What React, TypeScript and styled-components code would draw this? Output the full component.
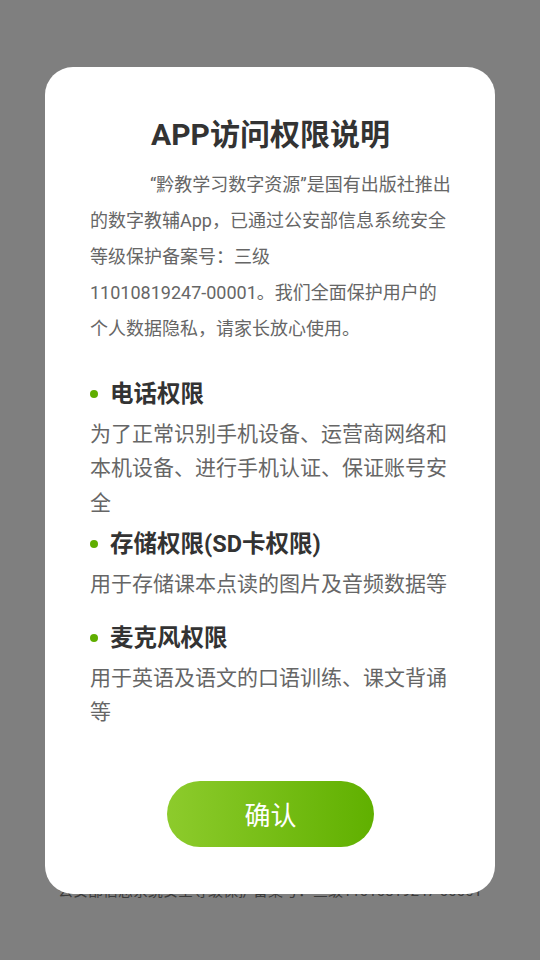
import * as React from 'react';
import styled, { createGlobalStyle } from 'styled-components';

const GlobalStyle = createGlobalStyle`
  html, body {
    margin: 0;
    padding: 0;
    background: #fff;
  }
  body {
    font-family: Roboto, "Noto Sans CJK SC", sans-serif;
  }
`;

const sections = [
  {
    title: '电话权限',
    text: '为了正常识别手机设备、运营商网络和本机设备、进行手机认证、保证账号安全',
    space: 7,
  },
  {
    title: '存储权限(SD卡权限)',
    text: '用于存储课本点读的图片及音频数据等',
    space: 19,
  },
  {
    title: '麦克风权限',
    text: '用于英语及语文的口语训练、课文背诵等',
    space: 0,
  },
];

export default function App() {
  return (
    <>
      <GlobalStyle />
      <Page>
        <Footer>公安部信息系统安全等级保护备案号：三级11010819247-00001</Footer>
      </Page>
      <Overlay>
        <Dialog>
          <Title>APP访问权限说明</Title>
          <Intro>
            “黔教学习数字资源”是国有出版社推出的数字教辅App，已通过公安部信息系统安全等级保护备案号：三级
            <NoBreak>11010819247-00001</NoBreak>。我们全面保护用户的个人数据隐私，请家长放心使用。
          </Intro>
          <List>
            {sections.map((s) => (
              <Section key={s.title} $space={s.space}>
                <Heading>
                  <Dot />
                  {s.title}
                </Heading>
                <Desc>{s.text}</Desc>
              </Section>
            ))}
          </List>
          <ConfirmButton>确认</ConfirmButton>
        </Dialog>
      </Overlay>
    </>
  );
}

const Page = styled.div`
  height: 960px;
  display: flex;
  flex-direction: column;
  justify-content: flex-end;
  align-items: center;
  padding-bottom: 59px;
  box-sizing: border-box;
`;

const Footer = styled.div`
  font-size: 15px;
  line-height: 20px;
  color: #777;
  white-space: nowrap;
`;

const Overlay = styled.div`
  position: fixed;
  inset: 0;
  background: rgba(0, 0, 0, 0.5);
  display: flex;
  align-items: center;
  justify-content: center;
`;

const Dialog = styled.div`
  width: 450px;
  box-sizing: border-box;
  background: #fff;
  border-radius: 28px;
  padding: 48px 44px 47px 45px;
  display: flex;
  flex-direction: column;
`;

const Title = styled.h1`
  margin: 0;
  text-align: center;
  font-size: 30px;
  line-height: 40px;
  font-weight: 700;
  color: #333;
`;

const Intro = styled.p`
  margin: 12px 0 0;
  font-size: 18px;
  line-height: 36px;
  color: #666;
  text-indent: 60px;
`;

const NoBreak = styled.span`
  white-space: nowrap;
`;

const List = styled.div`
  margin-top: 30px;
  display: flex;
  flex-direction: column;
`;

const Section = styled.div<{ $space: number }>`
  margin-bottom: ${(p) => p.$space}px;
`;

const Heading = styled.h2`
  margin: 0;
  display: flex;
  align-items: center;
  gap: 12px;
  font-size: 23.5px;
  line-height: 34px;
  font-weight: 700;
  color: #333;
`;

const Dot = styled.span`
  width: 8px;
  height: 8px;
  border-radius: 50%;
  background: #5fae00;
  flex-shrink: 0;
`;

const Desc = styled.p`
  margin: 6px 0 0;
  font-size: 21px;
  line-height: 34.5px;
  color: #666;
`;

const ConfirmButton = styled.button`
  align-self: center;
  margin-top: 51px;
  width: 207px;
  height: 66px;
  border: none;
  border-radius: 33px;
  background: linear-gradient(90deg, #8dcb2c 0%, #60b000 100%);
  color: #fff;
  font-family: Roboto, "Noto Sans CJK SC", sans-serif;
  font-size: 26px;
  padding: 0;
`;
